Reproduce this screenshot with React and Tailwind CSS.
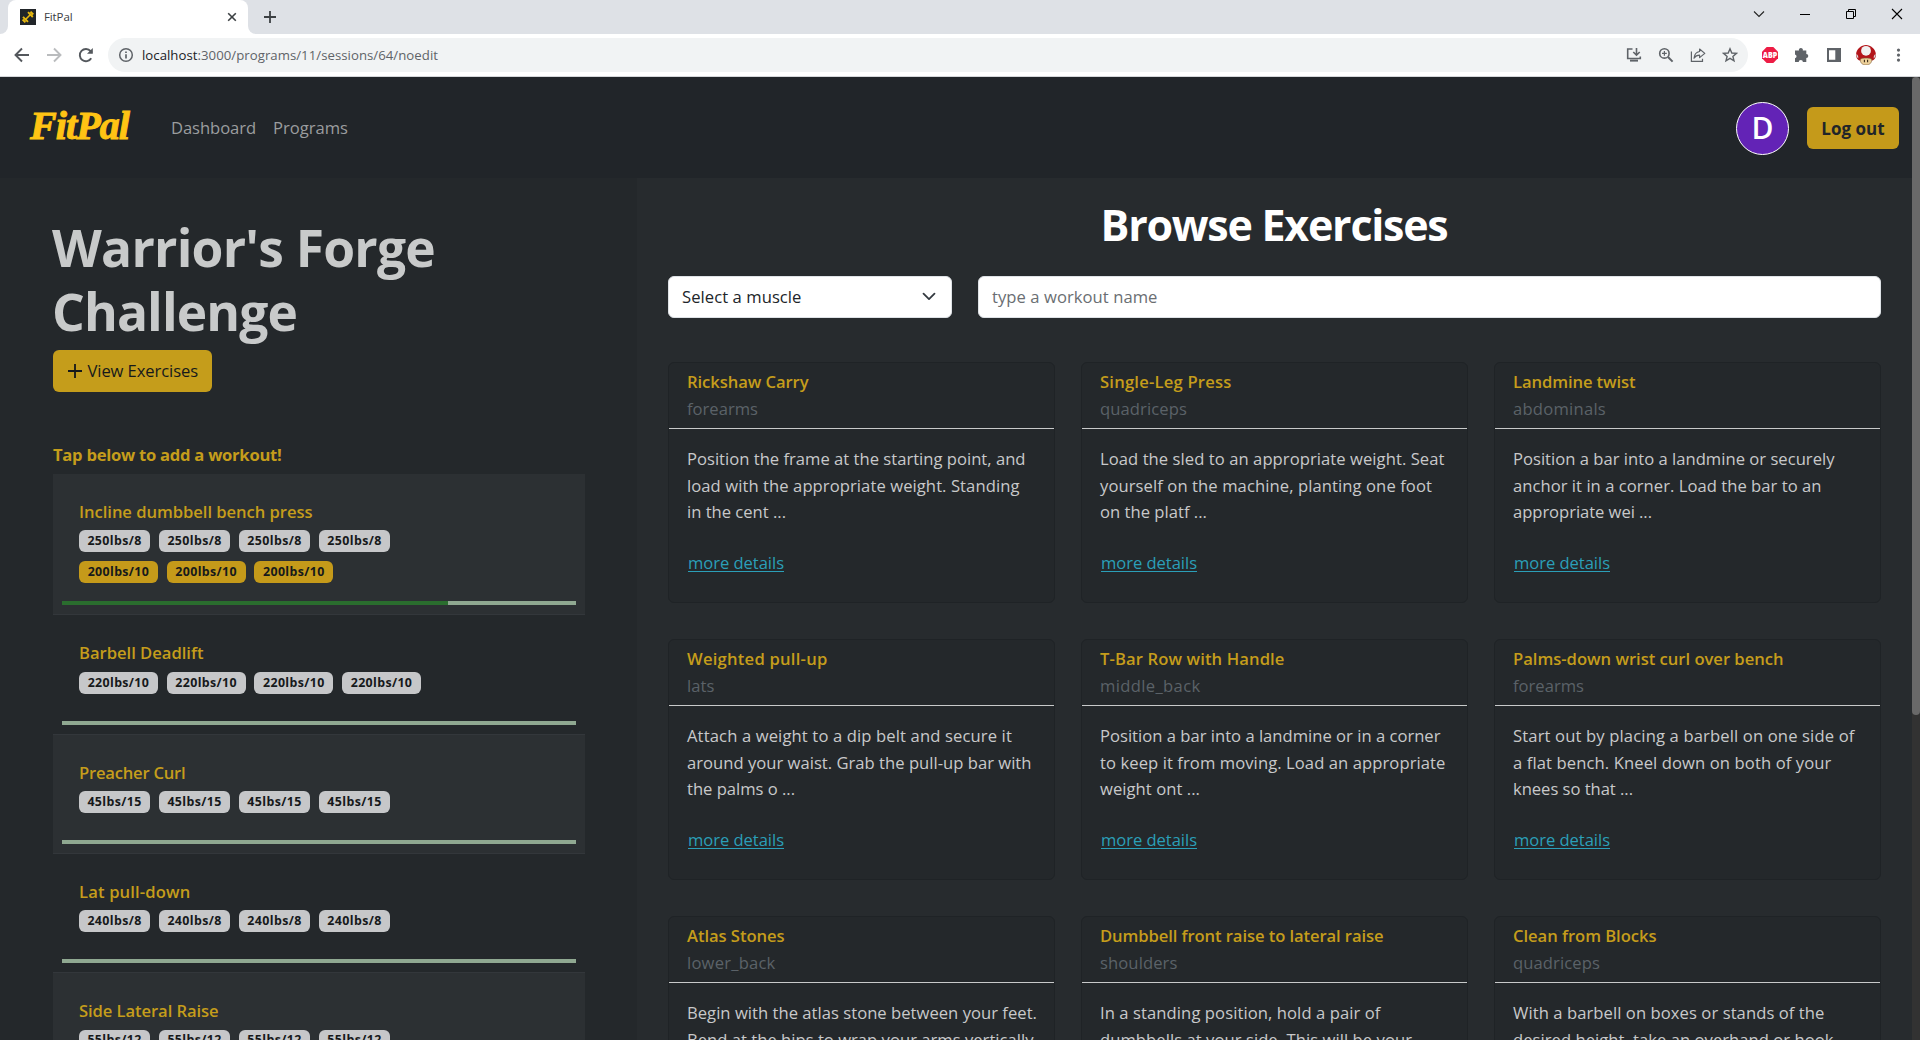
import { useLayoutEffect, useRef, useState } from "react";

// Inline text tracked so that its advance equals a given width.
function Fit({ w, className = "", children }) {
  const ref = useRef(null);
  const [spacing, setSpacing] = useState(0);
  useLayoutEffect(() => {
    const natural = ref.current.getBoundingClientRect().width;
    setSpacing((w - natural) / children.length);
  }, []);
  return (
    <span
      ref={ref}
      className={"inline-block whitespace-pre " + className}
      style={{ letterSpacing: spacing + "px" }}
    >
      {children}
    </span>
  );
}

const cards = [
  [["Rickshaw Carry", 121.5], ["forearms", 71], [["Position the frame at the starting point, and", 338.5], ["load with the appropriate weight. Standing", 332.5], ["in the cent ...", 99]]],
  [["Single-Leg Press", 131.5], ["quadriceps", 87], [["Load the sled to an appropriate weight. Seat", 344.5], ["yourself on the machine, planting one foot", 332], ["on the platf ...", 107]]],
  [["Landmine twist", 122.5], ["abdominals", 93], [["Position a bar into a landmine or securely", 321.5], ["anchor it in a corner. Load the bar to an", 308.5], ["appropriate wei ...", 139]]],
  [["Weighted pull-up", 140.5], ["lats", 27.5], [["Attach a weight to a dip belt and secure it", 325], ["around your waist. Grab the pull-up bar with", 344.5], ["the palms o ...", 108]]],
  [["T-Bar Row with Handle", 184.5], ["middle_back", 100.5], [["Position a bar into a landmine or in a corner", 340.5], ["to keep it from moving. Load an appropriate", 345.5], ["weight ont ...", 100]]],
  [["Palms-down wrist curl over bench", 270.5], ["forearms", 71], [["Start out by placing a barbell on one side of", 341.5], ["a flat bench. Kneel down on both of your", 318.5], ["knees so that ...", 120]]],
  [["Atlas Stones", 97.5], ["lower_back", 88.5], [["Begin with the atlas stone between your feet.", 350], ["Bend at the hips to wrap your arms vertically", 346.5]]],
  [["Dumbbell front raise to lateral raise", 283.5], ["shoulders", 77.5], [["In a standing position, hold a pair of", 280.5], ["dumbbells at your side. This will be your", 312]]],
  [["Clean from Blocks", 143.5], ["quadriceps", 87], [["With a barbell on boxes or stands of the", 311.5], ["desired height, take an overhand or hook", 320.5]]],
];

const workouts = [
  { name: ["Incline dumbbell bench press", 233.5], sets: ["250lbs/8", 4], done: ["200lbs/10", 3], progress: 75, h: "h-[141.4px]" },
  { name: ["Barbell Deadlift", 124.5], sets: ["220lbs/10", 4], h: "h-[119.3px]" },
  { name: ["Preacher Curl", 106.5], sets: ["45lbs/15", 4], h: "h-[119.3px]" },
  { name: ["Lat pull-down", 111.5], sets: ["240lbs/8", 4], h: "h-[119.3px]" },
  { name: ["Side Lateral Raise", 139.5], sets: ["55lbs/12", 4], h: "h-[119.3px]" },
];

function Badges({ sets: [label, count], color }) {
  const long = label.length > 8;
  return (
    <div className="flex h-[31px] items-start gap-[8.8px]">
      {Array.from({ length: count }, (_, i) => (
        <span
          key={i}
          className={"flex h-[22px] items-center justify-center rounded-[6px] text-[12.4px] leading-none font-bold text-[#16191b] " + color + (long ? " w-[78.9px]" : " w-[71.2px]")}
        >
          <Fit w={long ? 61.6 : 54.4}>{label}</Fit>
        </span>
      ))}
    </div>
  );
}

function Workout({ item, odd }) {
  return (
    <div className={"flex flex-col border-b border-[#33373b] px-[9px] pb-[9px] " + item.h + (odd ? " bg-[#2c3033]" : "")}>
      <div className="px-[17px] pt-[25px]">
        <div className="h-[31.4px] text-[16.6px] leading-[26px] font-semibold text-[#c59d1b]">
          <Fit w={item.name[1]}>{item.name[0]}</Fit>
        </div>
        <Badges sets={item.sets} color="bg-[#c6c7c9]" />
        {item.done && <Badges sets={item.done} color="bg-[#c59a1a]" />}
      </div>
      <div className="mt-auto h-1 shrink-0 bg-[#8fa891]">
        <div className="h-1 bg-[#2a6d2e]" style={{ width: (item.progress || 0) + "%" }} />
      </div>
    </div>
  );
}

function Card({ card: [title, muscle, lines] }) {
  return (
    <div className="flex h-[241px] flex-col rounded-[6px] border border-[#1f2326] bg-[#24282b] text-[16.6px] leading-[26.4px]">
      <div className="h-[66px] shrink-0 border-b border-[#c8caca] px-[18px] pt-[6.4px]">
        <div className="font-semibold text-[#c59d1b]"><Fit w={title[1]}>{title[0]}</Fit></div>
        <div className="text-[#5b6268]"><Fit w={muscle[1]}>{muscle[0]}</Fit></div>
      </div>
      <div className="px-[18px] pt-[17.2px] text-[#c8c9ca]">
        {lines.map(([t, w]) => (
          <div key={t} className="h-[26.4px]"><Fit w={w}>{t}</Fit></div>
        ))}
        <div className="mt-[25px] pl-px text-[#2b9fb8]">
          <Fit w={96} className="underline decoration-1 underline-offset-2">more details</Fit>
        </div>
      </div>
    </div>
  );
}

function Ico({ className = "", children, size = 16 }) {
  return (
    <svg width={size} height={size} viewBox={`0 0 ${size} ${size}`} fill="none" stroke="#5f6368" strokeWidth="1.6" className={"shrink-0 " + className}>
      {children}
    </svg>
  );
}

function TabStrip() {
  return (
    <div className="flex h-[34px] justify-between bg-[#dee1e6]">
      <div className="flex">
        <div className="w-2 bg-white"><div className="h-full rounded-br-lg bg-[#dee1e6]" /></div>
        <div className="flex w-[240px] items-center rounded-t-lg bg-white pr-[11px] pl-3">
          <svg width="16" height="16" viewBox="0 0 16 16" className="shrink-0">
            <rect width="16" height="16" fill="#212529" />
            <path d="M5 11L11 5" stroke="#e8b90f" strokeWidth="1.6" />
            <path d="M3 7.8L8 12.8M2.6 10.5L5.4 13.3M8 3.2L12.8 8M10.5 2.7L13.3 5.5" stroke="#e8b90f" strokeWidth="1.9" />
          </svg>
          <span className="ml-2 text-[11.5px] leading-none text-[#3c4043]"><Fit w={28.5}>FitPal</Fit></span>
          <Ico size={10} className="ml-auto"><path d="M1.2 1.2L8.8 8.8M8.8 1.2L1.2 8.8" stroke="#3c4043" /></Ico>
        </div>
        <div className="w-2 bg-white"><div className="h-full rounded-bl-lg bg-[#dee1e6]" /></div>
        <div className="flex w-7 items-center justify-center">
          <Ico size={12}><path d="M6 0V12M0 6H12" stroke="#3c4043" strokeWidth="1.8" /></Ico>
        </div>
      </div>
      <div className="flex items-center gap-[34px] pr-[17px] pb-[6px]">
        <Ico size={12}><path d="M1 3.5L6 8.5L11 3.5" stroke="#222" strokeWidth="1.1" /></Ico>
        <Ico size={12}><path d="M1 6.5H11" stroke="#000" strokeWidth="1" /></Ico>
        <Ico size={12}><path d="M1.5 3.5H8.5V10.5H1.5ZM3.5 3.5V1.5H10.5V8.5H8.5" stroke="#000" strokeWidth="1" /></Ico>
        <Ico size={12}><path d="M1 1L11 11M11 1L1 11" stroke="#000" strokeWidth="1.1" /></Ico>
      </div>
    </div>
  );
}

function Toolbar() {
  return (
    <div className="flex h-[43px] items-center border-b border-[#d5d7da] bg-white pl-[14px]">
      <div className="flex w-[94px] gap-4">
        <Ico><path d="M15 8H2M8 1.5L1.5 8L8 14.5" stroke="#54585d" strokeWidth="1.9" /></Ico>
        <Ico><path d="M1 8H14M8 1.5L14.5 8L8 14.5" stroke="#babcbe" strokeWidth="1.9" /></Ico>
        <Ico><path d="M13.2 11.2A6.1 6.1 0 1 1 12.6 4.2L14 5.6" stroke="#54585d" strokeWidth="1.9" /><path d="M14.8 1V6.8H9Z" fill="#54585d" stroke="none" /></Ico>
      </div>
      <div className="flex h-[34px] w-[1640px] items-center rounded-full bg-[#f1f3f4] pr-[10px] pl-[10px]">
        <Ico><circle cx="8" cy="8" r="6.3" strokeWidth="1.5" /><path d="M8 7.2V11.4M8 4.4V6" strokeWidth="1.7" /></Ico>
        <div className="ml-2 pt-px text-[13.2px] leading-none whitespace-pre text-[#5f6368]">
          <Fit w={55.5} className="text-[#202124]">localhost</Fit><Fit w={240.5}>:3000/programs/11/sessions/64/noedit</Fit>
        </div>
        <div className="ml-auto flex gap-4">
          <Ico><path d="M6.5 2H1.7V11.5H14.3V9.5" /><path d="M4 13.6H12" strokeWidth="2" /><path d="M10.5 1V8M7.3 5L10.5 8.2L13.7 5" /></Ico>
          <Ico><circle cx="6.4" cy="6.4" r="4.7" /><path d="M10 10L14.6 14.6" strokeWidth="2" /><path d="M6.4 4V8.8M4 6.4H8.8" strokeWidth="1.2" /></Ico>
          <Ico><path d="M1.4 4.5V14.4H12.5V11.8" strokeWidth="1.2" /><path d="M9.6 2L14.8 6.4L9.6 10.6V8.2C7 8.2 5.3 9.2 4 11.2C4.4 7.6 6.2 5 9.6 4.5Z" strokeWidth="1.2" strokeLinejoin="round" /></Ico>
          <Ico><path d="M8 1.8L9.8 6L14.4 6.4L10.9 9.4L12 13.8L8 11.4L4 13.8L5.1 9.4L1.6 6.4L6.2 6Z" strokeWidth="1.4" /></Ico>
        </div>
      </div>
      <div className="flex items-center">
        <svg width="16" height="16" viewBox="0 0 16 16" className="ml-[14px]">
          <path d="M4.7 0H11.3L16 4.7V11.3L11.3 16H4.7L0 11.3V4.7Z" fill="#ed1c45" />
          <text x="8" y="10.9" textAnchor="middle" textLength="14.4" lengthAdjust="spacingAndGlyphs" fontFamily="Open Sans" fontWeight="800" fontSize="8" fill="#fff">ABP</text>
        </svg>
        <Ico className="ml-4"><path d="M1 3.6H5A2 2 0 1 1 8.8 3.6H12.3V7A2 2 0 1 1 12.3 11V15H8.9A2 2 0 0 0 4.7 15H1V11.3A2 2 0 0 0 1 7.4Z" fill="#5f6368" stroke="none" /></Ico>
        <Ico className="ml-4"><path d="M1 1H15V15H1ZM3 3.2V12.8H9.3V3.2Z" fill="#5f6368" fillRule="evenodd" stroke="none" /></Ico>
        <svg width="20" height="20" viewBox="0 0 20 20" className="ml-[14px]">
          <path d="M10 0C14.5 0 19.9 3.8 19.9 9.7C19.9 13.6 17.4 16 14.5 15.5H5.5C2.6 16 .1 13.6 .1 9.7C.1 3.8 5.5 0 10 0Z" fill="#b3151a" />
          <path d="M4.3 14.2C5.8 12.7 14.2 12.7 15.7 14.2C16 17.6 13.8 20 10 20C6.2 20 4 17.6 4.3 14.2Z" fill="#ecd09a" stroke="#7b5a32" strokeWidth=".6" />
          <path d="M8.4 14.8V17.3M11.6 14.8V17.3" stroke="#3a2a18" strokeWidth="1.1" />
          <ellipse cx="10" cy="5.8" rx="4.9" ry="4.9" fill="#f1f1f1" />
          <path d="M.4 9C1.8 9.6 2.6 11.6 2.2 13.4C.9 12.4 .3 10.7 .4 9ZM19.6 9C18.2 9.6 17.4 11.6 17.8 13.4C19.1 12.4 19.7 10.7 19.6 9Z" fill="#dedede" />
        </svg>
        <Ico className="ml-[14px]"><g fill="#5f6368" stroke="none"><circle cx="8.5" cy="3.1" r="1.6" /><circle cx="8.5" cy="8.1" r="1.6" /><circle cx="8.5" cy="13.1" r="1.6" /></g></Ico>
      </div>
    </div>
  );
}

function Navbar() {
  return (
    <div className="flex h-[101px] items-center bg-[#212529] pt-px pr-[13px] pl-[30px]">
      <div className="w-[141px] pb-1 font-['Liberation_Serif'] text-[40px] leading-none font-bold text-[#ffc414] italic [-webkit-text-stroke:1px_#ffc414]">
        <Fit w={99}>FitPal</Fit>
      </div>
      <div className="flex gap-[17px] pt-px text-[16.6px] leading-none text-[#9b9d9f]">
        <Fit w={85}>Dashboard</Fit>
        <Fit w={75}>Programs</Fit>
      </div>
      <div className="ml-auto flex items-center gap-[18px]">
        <div className="flex size-[53px] items-center justify-center rounded-full border border-white bg-[#6323b6] text-[30px] leading-none font-semibold text-white">D</div>
        <div className="flex h-[42px] w-[92px] items-center justify-center rounded-[6px] bg-[#c59a1a] text-[17px] leading-none font-bold text-[#212529]">
          <Fit w={63.5}>Log out</Fit>
        </div>
      </div>
    </div>
  );
}

export default function App() {
  return (
    <div className="flex h-[1040px] w-[1920px] flex-col overflow-hidden bg-[#272b2e] font-['Open_Sans',sans-serif]">
      <TabStrip />
      <Toolbar />
      <div className="flex min-h-0 flex-1">
        <div className="flex w-[1912px] flex-col">
          <Navbar />
          <div className="flex min-h-0 flex-1 overflow-hidden">
            <aside className="w-[637px] shrink-0 bg-[#24282b] pt-[37px] pr-[52px] pl-[53px]">
              <div className="text-[51.5px] leading-[64px] font-bold text-[#c8caca]">
                <div className="-ml-px h-16"><Fit w={383}>Warrior's Forge</Fit></div>
                <div className="-ml-px h-16"><Fit w={245}>Challenge</Fit></div>
              </div>
              <div className="mt-[7px] flex h-[42px] w-[159px] items-center rounded-[6px] bg-[#c59d1b] pl-[15px] text-[16.6px] leading-none text-[#16191b]">
                <Ico size={14}><path d="M7 0V14M0 7H14" stroke="#16191b" strokeWidth="1.8" strokeLinecap="round" /></Ico>
                <Fit w={110.5} className="ml-[5.5px]">View Exercises</Fit>
              </div>
              <div className="mt-[50px] h-8 text-[16.6px] leading-[26.4px] font-bold text-[#c59d1b]">
                <Fit w={228.5}>Tap below to add a workout!</Fit>
              </div>
              <div>
                {workouts.map((item, i) => <Workout key={i} item={item} odd={i % 2 === 0} />)}
              </div>
            </aside>
            <main className="flex-1 bg-[#272b2e] pr-[31px] pl-[31px]">
              <div className="flex h-[98px] justify-center pt-[20px] pr-px text-[43px] leading-[53px] font-bold text-white">
                <Fit w={347}>Browse Exercises</Fit>
              </div>
              <div className="flex h-[42px] gap-[26px] text-[16.6px] leading-none">
                <div className="flex w-[284px] items-center justify-between rounded-[6px] border border-[#dee2e6] bg-white pr-[15px] pl-[13px] text-[#212529]">
                  <Fit w={119.5}>Select a muscle</Fit>
                  <Ico size={14}><path d="M1.5 3.6L7 9.1L12.5 3.6" stroke="#343a40" strokeWidth="1.8" strokeLinecap="round" strokeLinejoin="round" /></Ico>
                </div>
                <div className="flex flex-1 items-center rounded-[6px] border border-[#dee2e6] bg-white pl-[13px] text-[#6a6e72]">
                  <Fit w={165.5}>type a workout name</Fit>
                </div>
              </div>
              <div className="mt-[44px] grid grid-cols-3 gap-x-[26px] gap-y-9">
                {cards.map((card, i) => <Card key={i} card={card} />)}
              </div>
            </main>
          </div>
        </div>
        <div className="w-2 bg-[#323232]"><div className="h-[638px] rounded-full bg-[#696969]" /></div>
      </div>
    </div>
  );
}
